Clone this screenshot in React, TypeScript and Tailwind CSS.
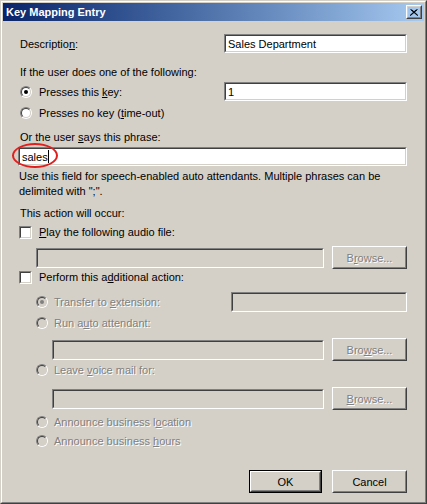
import type { ReactNode } from "react";

const dim = "text-[#808080] [text-shadow:1px_1px_0_#fff]";

function Sunken({
  className = "",
  disabled = false,
  children,
}: {
  className?: string;
  disabled?: boolean;
  children?: ReactNode;
}) {
  return (
    <div
      className={`border border-t-[#808080] border-l-[#808080] border-b-white border-r-white ${className}`}
    >
      <div
        className={`h-full border border-t-[#404040] border-l-[#404040] border-b-[#D4D0C8] border-r-[#D4D0C8] flex items-center pl-[1px] ${
          disabled ? "bg-[#D4D0C8]" : "bg-white"
        }`}
      >
        {children}
      </div>
    </div>
  );
}

function Button({
  children,
  disabled = false,
  isDefault = false,
  className = "",
}: {
  children: ReactNode;
  disabled?: boolean;
  isDefault?: boolean;
  className?: string;
}) {
  const face = (
    <div className="h-full border border-t-white border-l-white border-b-[#404040] border-r-[#404040]">
      <div
        className={`h-full border border-t-[#D4D0C8] border-l-[#D4D0C8] border-b-[#808080] border-r-[#808080] flex items-center justify-center ${
          disabled ? dim : "text-black"
        }`}
      >
        {children}
      </div>
    </div>
  );
  if (isDefault) {
    return <div className={`border border-black ${className}`}>{face}</div>;
  }
  return <div className={className}>{face}</div>;
}

function Radio({ checked = false, disabled = false }: { checked?: boolean; disabled?: boolean }) {
  return (
    <span className="shrink-0 w-[12px] h-[12px] rounded-full border border-t-[#808080] border-l-[#808080] border-b-white border-r-white">
      <span
        className={`w-full h-full rounded-full border border-t-[#404040] border-l-[#404040] border-b-[#D4D0C8] border-r-[#D4D0C8] flex items-center justify-center ${
          disabled ? "bg-[#D4D0C8]" : "bg-white"
        }`}
      >
        {checked && (
          <span className={`w-[4px] h-[4px] rounded-full ${disabled ? "bg-[#808080]" : "bg-black"}`} />
        )}
      </span>
    </span>
  );
}

function Checkbox() {
  return (
    <span className="shrink-0 w-[13px] h-[13px] border border-t-[#808080] border-l-[#808080] border-b-white border-r-white">
      <span className="block w-full h-full border border-t-[#404040] border-l-[#404040] border-b-[#D4D0C8] border-r-[#D4D0C8] bg-white" />
    </span>
  );
}

export default function App() {
  return (
    <div className="w-[427px] h-[504px] font-['Liberation_Sans',Arial,sans-serif] text-[11px] leading-[14px] text-black border border-t-[#D4D0C8] border-l-[#D4D0C8] border-b-[#404040] border-r-[#404040]">
      <div className="h-full border border-t-white border-l-white border-b-[#808080] border-r-[#808080] bg-[#D4D0C8] p-[1px] flex flex-col">
        {/* title bar */}
        <div className="h-[18px] shrink-0 bg-linear-to-r from-[#0A246A] to-[#A6CAF0] flex items-center pl-[3px] pr-[2px]">
          <span className="text-white font-bold text-[11px]">Key Mapping Entry</span>
          <Button className="ml-auto w-[16px] h-[14px]">
            <svg width="8" height="7" viewBox="0 0 8 7">
              <path d="M0.5 0.5 L7.5 6.5 M1.5 0.5 L8 6.5 M7.5 0.5 L0.5 6.5 M6.5 0.5 L0 6.5" stroke="#000" strokeWidth="1" />
            </svg>
          </Button>
        </div>

        {/* body */}
        <div className="relative flex-1 flex flex-col pl-[17px] pr-[17px]">
          <div className="mt-[13px] h-[19px] flex items-center">
            <span>
              Descriptio<span className="underline">n</span>:
            </span>
            <Sunken className="ml-auto w-[183px] h-[19px]">
              <span className="pl-[1px]">Sales Department</span>
            </Sunken>
          </div>

          <div className="mt-[12px] h-[14px] flex items-center">If the user does one of the following:</div>

          <div className="mt-[3px] h-[19px] flex items-center">
            <Radio checked />
            <span className="ml-[7px]">
              Presses this <span className="underline">k</span>ey:
            </span>
            <Sunken className="ml-auto w-[183px] h-[19px]">
              <span className="pl-[1px]">1</span>
            </Sunken>
          </div>

          <div className="mt-[5px] h-[14px] flex items-center">
            <Radio />
            <span className="ml-[7px]">
              Presses no key (<span className="underline">t</span>ime-out)
            </span>
          </div>

          <div className="mt-[10px] h-[14px] flex items-center">
            <span>
              Or the user <span className="underline">s</span>ays this phrase:
            </span>
          </div>

          <Sunken className="mt-[3px] -ml-[2px] h-[19px]">
            <span className="pl-[1px]">sales</span>
            <span className="w-px h-[13px] bg-black" />
          </Sunken>

          <p className="mt-[3px] -ml-[1px] leading-[15px] h-[30px]">
            Use this field for speech-enabled auto attendants. Multiple phrases can be delimited with ";".
          </p>

          <div className="mt-[7px] h-[14px] flex items-center">This action will occur:</div>

          <div className="mt-[5px] h-[14px] flex items-center -ml-[1px]">
            <Checkbox />
            <span className="ml-[7px]">
              <span className="underline">P</span>lay the following audio file:
            </span>
          </div>

          <div className="mt-[7px] h-[23px] flex items-center pl-[16px]">
            <Sunken disabled className="w-[288px] h-[20px]" />
            <Button disabled className="ml-auto w-[75px] h-[23px]">
              B<span className="underline">r</span>owse...
            </Button>
          </div>

          <div className="mt-[1px] h-[14px] flex items-center -ml-[1px]">
            <Checkbox />
            <span className="ml-[7px]">
              Perform this a<span className="underline">d</span>ditional action:
            </span>
          </div>

          <div className="mt-[8px] h-[20px] flex items-center pl-[16px]">
            <Radio checked disabled />
            <span className={`ml-[6px] ${dim}`}>
              Transfer to <span className="underline">e</span>xtension:
            </span>
            <Sunken disabled className="ml-auto w-[176px] h-[20px]" />
          </div>

          <div className="mt-[4px] h-[14px] flex items-center pl-[16px]">
            <Radio disabled />
            <span className={`ml-[6px] ${dim}`}>
              Run a<span className="underline">u</span>to attendant:
            </span>
          </div>

          <div className="mt-[8px] h-[23px] flex items-center pl-[32px]">
            <Sunken disabled className="w-[272px] h-[20px]" />
            <Button disabled className="ml-auto w-[75px] h-[23px]">
              Bro<span className="underline">w</span>se...
            </Button>
          </div>

          <div className="mt-[2px] h-[14px] flex items-center pl-[16px]">
            <Radio disabled />
            <span className={`ml-[6px] ${dim}`}>
              Leave <span className="underline">v</span>oice mail for:
            </span>
          </div>

          <div className="mt-[10px] h-[23px] flex items-center pl-[32px]">
            <Sunken disabled className="w-[272px] h-[20px]" />
            <Button disabled className="ml-auto w-[75px] h-[23px]">
              <span className="underline">B</span>rowse...
            </Button>
          </div>

          <div className="mt-[5px] h-[14px] flex items-center pl-[16px]">
            <Radio disabled />
            <span className={`ml-[6px] ${dim}`}>
              Announce business l<span className="underline">o</span>cation
            </span>
          </div>

          <div className="mt-[5px] h-[14px] flex items-center pl-[16px]">
            <Radio disabled />
            <span className={`ml-[6px] ${dim}`}>
              Announce business <span className="underline">h</span>ours
            </span>
          </div>

          <div className="mt-[22px] h-[23px] flex justify-end gap-[10px]">
            <Button isDefault className="w-[73px] h-[23px]">
              OK
            </Button>
            <Button className="w-[75px] h-[23px]">Cancel</Button>
          </div>

          {/* red highlight drawn over the phrase field */}
          <div className="absolute left-[9px] top-[122px] w-[46px] h-[25px] rounded-[50%] border-2 border-[#E0201E]" />
        </div>
      </div>
    </div>
  );
}
